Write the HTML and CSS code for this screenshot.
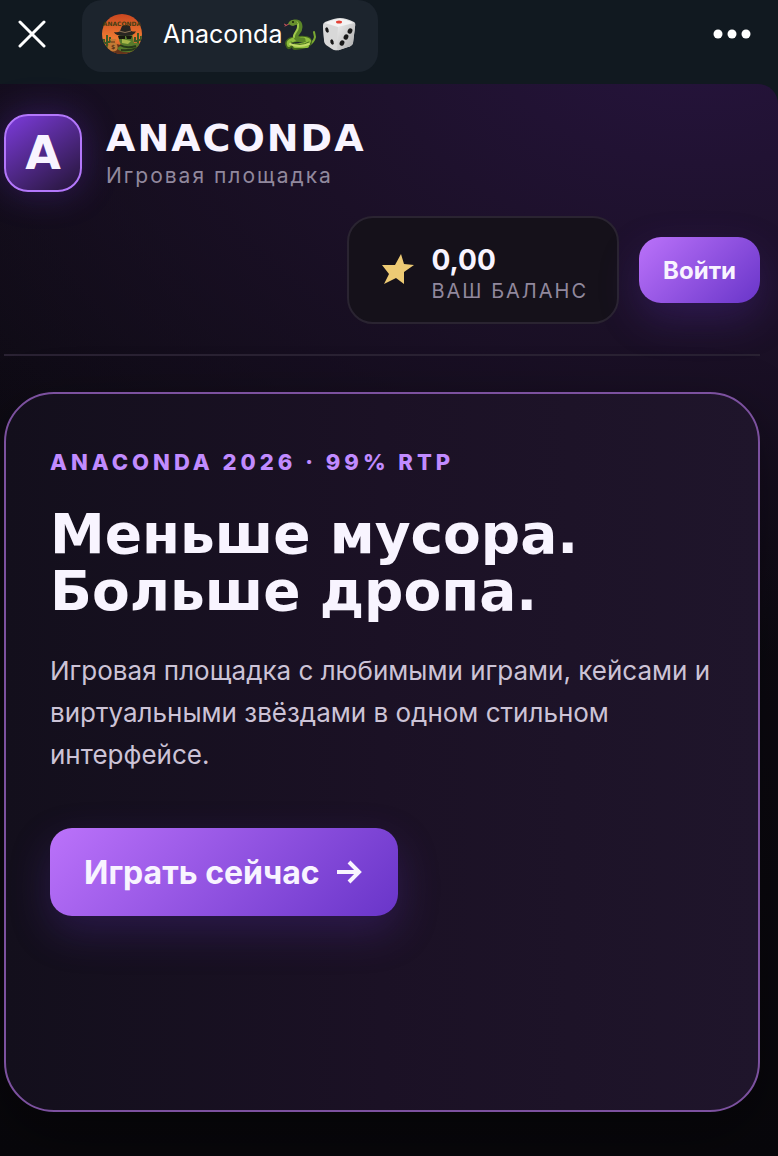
FILE: index.html
```html
<!DOCTYPE html>
<html lang="ru">
<head>
    <meta charset="UTF-8">
    <meta name="viewport" content="width=device-width, initial-scale=1.0">
    <title>Anaconda</title>
    <link rel="stylesheet" href="styles.css">
</head>
<body>
    <nav class="topbar">
        <button class="icon-btn" type="button" aria-label="Закрыть">
            <svg width="28" height="28" viewBox="0 0 28 28" fill="none" stroke="#fff" stroke-width="3" stroke-linecap="round">
                <path d="M2 2l24 24M26 2L2 26"/>
            </svg>
        </button>
        <div class="tab">
            <svg class="avatar" width="42" height="42" viewBox="0 0 42 42" aria-hidden="true">
                <defs>
                    <clipPath id="round"><circle cx="21" cy="21" r="20"/></clipPath>
                    <linearGradient id="sunset" x1="0" y1="0" x2="0" y2="1">
                        <stop offset="0" stop-color="#c8451f"/>
                        <stop offset=".6" stop-color="#ef7a32"/>
                        <stop offset="1" stop-color="#b64a1c"/>
                    </linearGradient>
                </defs>
                <g clip-path="url(#round)">
                    <rect width="42" height="42" fill="url(#sunset)"/>
                    <path d="M0 34q10-5 20-2t22-2v12H0z" fill="#63331a"/>
                    <path d="M6 22v13M3 26v4h3M9 24v5H6M37 20v12M34 24v4h3M40 23v4h-3" fill="none" stroke="#3c5a25" stroke-width="2"/>
                    <path d="M18 20q-1 10 3 12l-5 3q2 5 14 4 11 0 10-5-1-5-7-4l-2-10z" fill="#577a2b"/>
                    <path d="M21 26l9 2-3 3-6-1z" fill="#a6b648"/>
                    <path d="M19 32q6 4 16 1M20 37q8 1 17-2" stroke="#26391a" stroke-width="2" fill="none"/>
                    <path d="M17 23h7v3h-6zM25 23h6l-1 3h-4z" fill="#17180f"/>
                    <path d="M13 19q4 1 6-1l2-5q4-2 8 0l1 5q4 1 5 0-1 5-11 5t-11-4z" fill="#282521"/>
                    <path d="M18 18q6 3 12 0" stroke="#8c7356" stroke-width="1" fill="none"/>
                    <path d="M10 29l-1-3h6l-1 3q4 4 2 8-4 3-9 0-2-4 3-8z" fill="#c17a35"/>
                    <path d="M10 29h4" stroke="#5d3217" stroke-width="1"/>
                    <text x="12" y="36" class="avatar-text" text-anchor="middle">$</text>
                </g>
                <text x="21" y="13" class="avatar-name" text-anchor="middle">ANACONDA</text>
            </svg>
            <span class="tab-title">Anaconda</span>
            <svg class="snake" width="34" height="34" viewBox="0 0 34 34" fill="none" stroke-linecap="round" stroke-linejoin="round" aria-hidden="true">
                <path d="M5 7L1 9M2 8L0 7" stroke="#c8525a" stroke-width="1"/>
                <path d="M25 28q5-3 6-8l-1-5" stroke="#79a832" stroke-width="2"/>
                <path d="M5 29q-4-6 9-7 11-1 11 3t-14 5" stroke="#42651c" stroke-width="6"/>
                <path d="M5 28q-2-5 9-6 10-1 11 2 0 3-14 5h12" stroke="#8fbe3d" stroke-width="4"/>
                <path d="M7 25q9 5 18 0" stroke="#4b7120" stroke-width="1"/>
                <path d="M6 27q9 4 19 0" stroke="#c2da67" stroke-width="2"/>
                <path d="M8 6q8-3 8 4c0 6-5 6-4 10q1 3 7 3" stroke="#5b8628" stroke-width="5"/>
                <path d="M9 5q6-1 5 5c0 4-5 7-4 10" stroke="#a0c94b" stroke-width="2"/>
                <path d="M4 7q2-5 8-4l2 4-5 2z" fill="#678f2d"/>
                <circle cx="9" cy="5" r="1" fill="#172009"/>
            </svg>
            <svg class="dice" width="34" height="34" viewBox="0 0 34 34" aria-hidden="true">
                <defs>
                    <linearGradient id="side" x1="0" y1="0" x2="1" y2="1">
                        <stop offset="0" stop-color="#ededed"/>
                        <stop offset="1" stop-color="#aaa"/>
                    </linearGradient>
                </defs>
                <path d="M3 5Q13 1 18 1q6 0 14 4 2 1 1 5l-2 16q-1 3-5 4l-9 3q-3 1-6-1l-7-5q-2-2-2-5L1 9q0-3 2-4z" fill="#dedede"/>
                <path d="M2 6l14 4-1 23q-2 1-5-1l-6-4q-2-2-2-5L1 9z" fill="#d8d8d8"/>
                <path d="M16 10l17-4v4l-2 16q-1 3-5 4l-9 3q-2 1-2-2z" fill="url(#side)"/>
                <path d="M3 6Q13 2 18 2q6 0 13 4L16 10z" fill="#f3f3f3"/>
                <ellipse cx="17" cy="5" rx="3" ry="1.5" fill="#e44236"/>
                <g fill="#171717">
                    <ellipse cx="5" cy="13" rx="1.6" ry="2.7" transform="rotate(-18 5 13)"/>
                    <ellipse cx="10" cy="25" rx="1.6" ry="2.7" transform="rotate(-18 10 25)"/>
                    <ellipse cx="28" cy="14" rx="2.3" ry="2.8" transform="rotate(25 28 14)"/>
                    <ellipse cx="24" cy="20" rx="2.3" ry="2.8" transform="rotate(25 24 20)"/>
                    <ellipse cx="20" cy="26" rx="2.3" ry="2.8" transform="rotate(25 20 26)"/>
                </g>
            </svg>
        </div>
        <button class="icon-btn menu-btn" type="button" aria-label="Меню">
            <svg width="40" height="12" viewBox="0 0 40 12" fill="#fff">
                <circle cx="6" cy="6" r="4.5"/><circle cx="20" cy="6" r="4.5"/><circle cx="34" cy="6" r="4.5"/>
            </svg>
        </button>
    </nav>

    <div class="app">
        <header class="header">
            <div class="brand">
                <div class="logo">A</div>
                <div>
                    <div class="brand-name">ANACONDA</div>
                    <div class="brand-sub">Игровая площадка</div>
                </div>
            </div>
            <div class="account">
                <div class="balance">
                    <svg width="34" height="34" viewBox="0 0 34 34" fill="#edca74" aria-hidden="true">
                        <path d="M20 1l3 10 10 1-10 7v12l-8-6-12 6 5-10-7-9h13z"/>
                    </svg>
                    <div class="balance-text">
                        <div class="balance-value">0,00</div>
                        <div class="balance-label">ВАШ БАЛАНС</div>
                    </div>
                </div>
                <button class="login" type="button">Войти</button>
            </div>
        </header>

        <main class="hero">
            <p class="eyebrow">ANACONDA 2026 · 99% RTP</p>
            <h1>Меньше мусора.<br>Больше дропа.</h1>
            <p class="lead">Игровая площадка с любимыми играми, кейсами и виртуальными звёздами в одном стильном интерфейсе.</p>
            <button class="play" type="button">
                Играть сейчас
                <svg width="26" height="24" viewBox="0 0 26 24" fill="none" stroke="currentColor" stroke-width="4" aria-hidden="true">
                    <path d="M1 12h22M13 2l10 10-10 10"/>
                </svg>
            </button>
        </main>
    </div>
</body>
</html>
```
FILE: styles.css
```css
* {
    box-sizing: border-box;
}
body {
    margin: 0;
    min-height: 100vh;
    display: flex;
    flex-direction: column;
    background-color: #111920;
    color: #f8f4ff;
    font-family: Inter, sans-serif;
}
button {
    border: none;
    color: inherit;
    font-family: inherit;
    cursor: pointer;
}
h1, p {
    margin: 0;
}

.topbar {
    display: flex;
    align-items: flex-start;
    height: 84px;
    padding: 0 24px 0 16px;
}
.icon-btn {
    display: flex;
    align-items: center;
    height: 68px;
    padding: 0 2px;
    background: none;
}
.menu-btn {
    margin-left: auto;
}
.tab {
    display: flex;
    align-items: center;
    height: 72px;
    margin-left: 34px;
    padding: 0 22px 4px 19px;
    background-color: #1c242d;
    border-radius: 20px;
}
.avatar {
    margin-right: 20px;
}
.avatar-name {
    font: bold 6px "DejaVu Sans", sans-serif;
    fill: #443d14;
}
.avatar-text {
    font: bold 6px "DejaVu Sans", sans-serif;
    fill: #5d3217;
}
.tab-title {
    font-size: 25px;
    line-height: 32px;
    color: #fff;
}
.snake {
    margin-left: 2px;
}
.dice {
    margin-left: 4px;
}

.app {
    flex: 1;
    padding: 30px 18px 44px 4px;
    border-top-right-radius: 20px;
    background: radial-gradient(ellipse 900px 660px at 90% -8%, #27143f 0%, #1b1027 50%, rgba(14, 10, 20, 0) 100%), linear-gradient(#100c17, #08070b);
}
.header {
    padding-bottom: 30px;
    border-bottom: 2px solid #2a2233;
}
.brand {
    display: flex;
    align-items: center;
    gap: 24px;
}
.logo {
    display: flex;
    align-items: center;
    justify-content: center;
    width: 78px;
    height: 78px;
    border: 2px solid #b377fb;
    border-radius: 24px;
    background: linear-gradient(145deg, #7c3bdb, #241536);
    box-shadow: 0 0 36px rgba(124, 58, 237, 0.3);
    font-family: "DejaVu Sans", sans-serif;
    font-size: 46px;
    font-weight: bold;
}
.brand-name {
    padding-top: 2px;
    font-family: "DejaVu Sans", sans-serif;
    font-size: 38px;
    font-weight: bold;
    line-height: 44px;
    letter-spacing: 2px;
}
.brand-sub {
    font-size: 21px;
    line-height: 32px;
    letter-spacing: 2px;
    color: #91889d;
}
.account {
    display: flex;
    align-items: center;
    justify-content: flex-end;
    gap: 20px;
    margin-top: 24px;
}
.balance {
    display: flex;
    align-items: center;
    gap: 16px;
    height: 108px;
    padding: 0 29px 0 32px;
    border: 2px solid #2a2431;
    border-radius: 26px;
    background-color: #15111a;
}
.balance-text {
    padding-top: 10px;
}
.balance-value {
    font-size: 28px;
    font-weight: bold;
    line-height: 32px;
}
.balance-label {
    font-size: 20px;
    line-height: 30px;
    letter-spacing: 2px;
    color: #91889d;
}
.login, .play {
    background: linear-gradient(135deg, #bb72fa, #6935c9);
    box-shadow: 0 16px 40px rgba(105, 53, 201, 0.25);
    color: #f8f4ff;
    font-weight: bold;
}
.login {
    height: 66px;
    padding: 0 24px;
    border-radius: 22px;
    font-size: 24px;
}

.hero {
    min-height: 720px;
    margin-top: 36px;
    padding: 50px 44px;
    border: 2px solid #7c519f;
    border-radius: 50px;
    background: linear-gradient(90deg, #130f1c, #1b1125 50%, #1f152b);
    box-shadow: 0 20px 60px rgba(0, 0, 0, 0.4);
}
.eyebrow {
    font-size: 22px;
    font-weight: 800;
    line-height: 36px;
    letter-spacing: 4px;
    color: #c18bff;
}
h1 {
    margin-top: 26px;
    font-family: "DejaVu Sans", sans-serif;
    font-size: 55px;
    font-weight: bold;
    line-height: 57px;
}
.lead {
    margin-top: 30px;
    font-size: 26px;
    line-height: 42px;
    color: #ccc3d6;
}
.play {
    display: flex;
    align-items: center;
    gap: 16px;
    height: 88px;
    margin-top: 52px;
    padding: 0 36px 0 34px;
    border-radius: 22px;
    font-size: 32px;
}
```
